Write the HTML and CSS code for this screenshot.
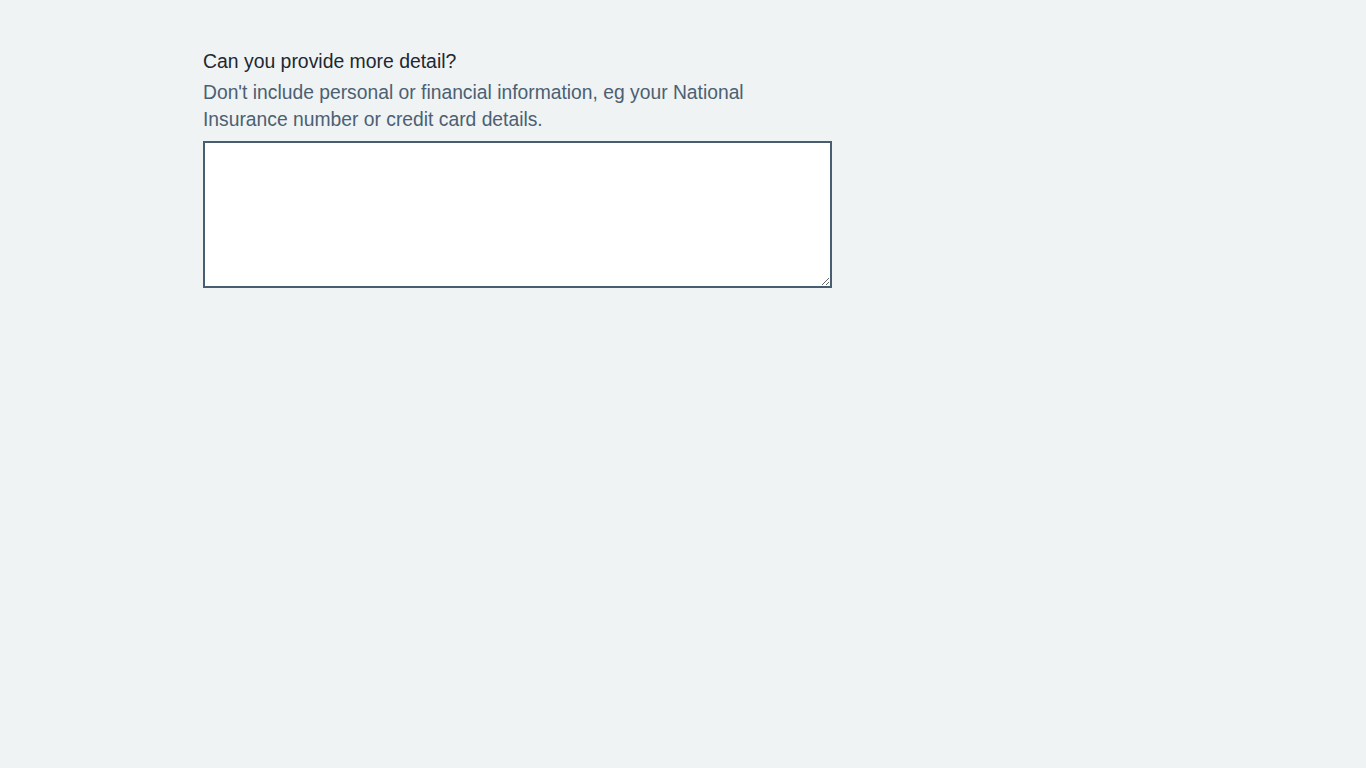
FILE: index.html
```html
<!DOCTYPE html>
<html lang="en">
<head>
<meta charset="utf-8">
<title>More detail</title>
<link rel="stylesheet" href="styles.css">
</head>
<body>
<main class="page">
  <div class="form-group">
    <label class="label" for="detail">Can you provide more detail?</label>
    <div class="hint">Don't include personal or financial information, eg your National Insurance number or credit card details.</div>
    <textarea class="textarea" id="detail" name="detail"></textarea>
  </div>
</main>
</body>
</html>
```
FILE: styles.css
```css
html, body {
  margin: 0;
  padding: 0;
  background: #eff3f4;
}
body {
  font-family: "Liberation Sans", Arial, sans-serif;
  min-height: 768px;
}
.page {
  padding: 48px 0 0 203px;
}
.form-group {
  width: 629px;
  display: flex;
  flex-direction: column;
}
.label {
  font-size: 19.4px;
  line-height: 27px;
  color: #1d2731;
  margin-bottom: 4px;
}
.hint {
  font-size: 19.3px;
  line-height: 27px;
  color: #4b6072;
  margin-bottom: 8px;
}
.textarea {
  box-sizing: border-box;
  width: 629px;
  height: 147px;
  border: 2px solid #485d70;
  background: #fff;
  margin: 0;
  padding: 5px;
  font-family: inherit;
  font-size: 19px;
  border-radius: 0;
  display: block;
}
```
